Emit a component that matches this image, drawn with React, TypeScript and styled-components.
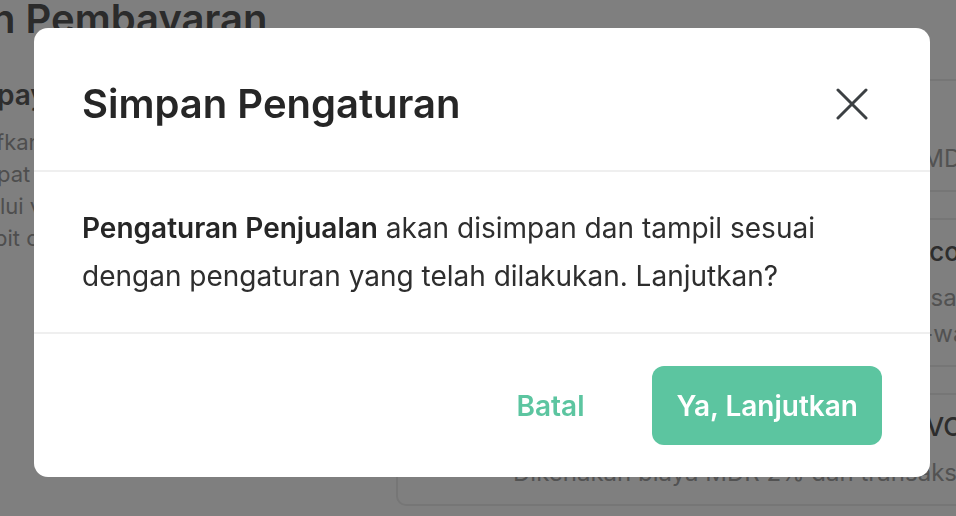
import styled, { createGlobalStyle } from 'styled-components';

const GlobalStyle = createGlobalStyle`
  * {
    box-sizing: border-box;
  }
  html, body {
    margin: 0;
    padding: 0;
    height: 516px;
    overflow: hidden;
    background: #ffffff;
    font-family: Inter, "Noto Sans", "Liberation Sans", sans-serif;
  }
`;

const green = '#5cc5a0';

/* ---------- page behind the dialog ---------- */

const Page = styled.div`
  display: flex;
  flex-direction: column;
  width: 1200px;
`;

const PageTitle = styled.h1`
  margin: -5px 0 0 -9px;
  font-size: 40px;
  line-height: 48px;
  font-weight: 600;
  color: #565656;
  white-space: nowrap;
`;

const Content = styled.div`
  display: flex;
  margin-top: 34px;
`;

const LeftCol = styled.div`
  width: 396px;
  flex-shrink: 0;
  overflow: hidden;
`;

const SectionTitle = styled.h2`
  margin: 0 0 0 -3px;
  font-size: 28px;
  line-height: 36px;
  font-weight: 600;
  color: #5c5c5c;
  white-space: nowrap;
`;

const SectionDesc = styled.div`
  margin-top: 13px;
  display: flex;
  flex-direction: column;
`;

const DescLine = styled.span<{ $shift?: number }>`
  margin-left: ${p => -(p.$shift ?? 0)}px;
  font-size: 22px;
  line-height: 32px;
  color: #9c9c9c;
  white-space: nowrap;
`;

const CardList = styled.div`
  flex: 1;
  display: flex;
  flex-direction: column;
  gap: 26px;
  margin-top: 2px;
`;

const Card = styled.div`
  border: 2px solid #ececec;
  border-right: none;
  border-radius: 10px 0 0 10px;
  padding: 14px 0 13px 115px;
`;

const CardTitle = styled.div`
  font-size: 26px;
  line-height: 36px;
  font-weight: 500;
  color: #5a5a5a;
  margin-bottom: 10px;
  white-space: nowrap;
`;

const CardDesc = styled.div`
  font-size: 24px;
  line-height: 36px;
  color: #a4a4a4;
  white-space: nowrap;
`;

/* ---------- dialog ---------- */

const Overlay = styled.div`
  position: fixed;
  inset: 0;
  background: rgba(0, 0, 0, 0.5);
  display: flex;
  align-items: flex-start;
  padding: 28px 26px 0 34px;
`;

const Dialog = styled.div`
  width: 896px;
  background: #ffffff;
  border-radius: 14px;
  display: flex;
  flex-direction: column;
  overflow: hidden;
`;

const Header = styled.div`
  height: 144px;
  padding: 9px 54px 0 48px;
  display: flex;
  align-items: center;
  justify-content: space-between;
  border-bottom: 2px solid #efefef;
`;

const Title = styled.h3`
  margin: 0;
  font-size: 40px;
  line-height: 48px;
  font-weight: 600;
  color: #262626;
`;

const CloseButton = styled.button`
  width: 48px;
  height: 48px;
  padding: 0;
  border: none;
  background: transparent;
  display: flex;
  align-items: center;
  justify-content: center;
  cursor: pointer;
`;

const Body = styled.p`
  margin: 0;
  padding: 32px 48px;
  font-size: 28px;
  line-height: 48px;
  color: #2e2e2e;

  strong {
    font-weight: 600;
    color: #262626;
  }
`;

const Footer = styled.div`
  border-top: 2px solid #efefef;
  padding: 32px 48px;
  display: flex;
  justify-content: flex-end;
  align-items: center;
  gap: 44px;
`;

const Button = styled.button<{ $primary?: boolean }>`
  height: 79px;
  padding: 0 24px;
  border: none;
  border-radius: 12px;
  font-family: inherit;
  font-size: 28px;
  font-weight: 600;
  cursor: pointer;
  background: ${p => (p.$primary ? green : 'transparent')};
  color: ${p => (p.$primary ? '#ffffff' : green)};
`;

const CloseIcon = () => (
	<svg width="32" height="32" viewBox="0 0 32 32" fill="none">
		<path d="M2 2L30 30M30 2L2 30" stroke="#3c4043" strokeWidth="3" strokeLinecap="round" />
	</svg>
);

const App = () => {
	return (
		<>
			<GlobalStyle />
			<Page>
				<PageTitle>n Pembayaran</PageTitle>
				<Content>
					<LeftCol>
						<SectionTitle>payment Online</SectionTitle>
						<SectionDesc>
							<DescLine $shift={4}>fkan pembayaran online agar</DescLine>
							<DescLine $shift={3}>pat membayar pesanan</DescLine>
							<DescLine>lui virtual account, e-wallet,</DescLine>
							<DescLine $shift={6}>bit card dan kartu kredit.</DescLine>
						</SectionDesc>
					</LeftCol>
					<CardList>
						<Card>
							<CardTitle>Tunai</CardTitle>
							<CardDesc>Transaksi tunai di kasir, tanpa biaya MDR</CardDesc>
						</Card>
						<Card>
							<CardTitle>Pembayaran Online via Xendit (E-commerce)</CardTitle>
							<CardDesc>Pelanggan membayar lewat link, transaksi</CardDesc>
							<CardDesc>masuk otomatis ke saldo dompet / e-wallet</CardDesc>
						</Card>
						<Card>
							<CardTitle>QRIS Semua E-wallets (GOPAY, OVO, DANA)</CardTitle>
							<CardDesc>Dikenakan biaya MDR 2% dan transaksi diproses</CardDesc>
						</Card>
					</CardList>
				</Content>
			</Page>
			<Overlay>
				<Dialog>
					<Header>
						<Title>Simpan Pengaturan</Title>
						<CloseButton aria-label="Tutup">
							<CloseIcon />
						</CloseButton>
					</Header>
					<Body>
						<strong>Pengaturan Penjualan</strong> akan disimpan dan tampil sesuai dengan pengaturan yang telah dilakukan. Lanjutkan?
					</Body>
					<Footer>
						<Button>Batal</Button>
						<Button $primary>Ya, Lanjutkan</Button>
					</Footer>
				</Dialog>
			</Overlay>
		</>
	);
};

export default App;
